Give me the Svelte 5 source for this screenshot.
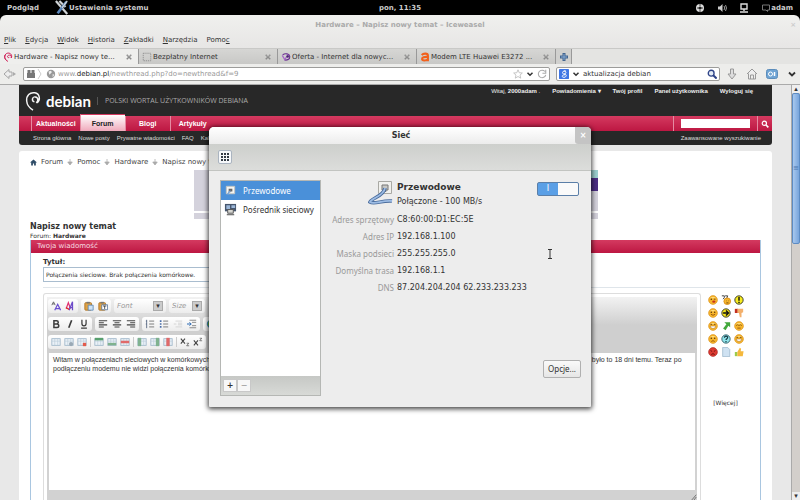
<script lang="ts">
    let subject = "Połączenia sieciowe. Brak połączenia komórkowe."
    let message = "Witam w połączeniach sieciowych w komórkowych nie mam możliwości dodania nowego połączenia w moim komputerze. Wcześniej system wykrywał modem bez problemu, było to 18 dni temu. Teraz po\npodłączeniu modemu nie widzi połączenia komórkowego."
    let search = "aktualizacja debian"
    let siteSearch = ""
    let wired = true
    let dialogShown = true
    let device = 0

    const menu = [
        ["P", "lik"], ["E", "dycja"], ["W", "idok"], ["H", "istoria"],
        ["Z", "akładki"], ["N", "arzędzia"], ["Pomo", "c"]
    ]

    const tabs = [
        { title: "Hardware - Napisz nowy te...", icon: "swirl" },
        { title: "Bezpłatny Internet", icon: "blank" },
        { title: "Oferta - Internet dla nowyc...", icon: "play" },
        { title: "Modem LTE Huawei E3272 ...", icon: "allegro" }
    ]

    const siteTabs = ["Aktualności", "Forum", "Blogi", "Artykuły"]
    const subLinks = ["Strona główna", "Nowe posty", "Prywatne wiadomości", "FAQ", "Kalendarz"]
    const crumbs = ["Forum", "Pomoc", "Hardware"]

    const rows = [
        [["fontColor", "clearFormat"], ["paste", "pasteText"]],
        [["bold", "italic", "underline"], ["left", "center", "right"], ["ordered", "bullets", "outdent", "indent"], ["globe"]],
        [["table", "tableEdit", "tableDel", "|", "rowTop", "rowBottom", "rowDel", "|", "colLeft", "colRight", "colDel", "|", "sub", "sup"]]
    ]

    const smilies = [
        "wink", "puzzled", "warn",
        "smile", "arrow", "down",
        "grin", "share", "cool",
        "sad", "ask", "grin",
        "angry", "page", "up"
    ]

    const details = [
        ["Adres sprzętowy", "C8:60:00:D1:EC:5E"],
        ["Adres IP", "192.168.1.100"],
        ["Maska podsieci", "255.255.255.0"],
        ["Domyślna trasa", "192.168.1.1"],
        ["DNS", "87.204.204.204 62.233.233.233"]
    ]

    const grid = '<rect x="1" y="2" width="10" height="8" fill="#eaf1f7" stroke="#9fb6c9"/><path d="M1 5h10M4.500 2v8M8 2v8" stroke="#b7c9d8" stroke-width=".7"/>'
    const face = '<circle cx="6" cy="6" r="5.300" fill="#f6b52c" stroke="#d98c13" stroke-width=".7"/><path d="M2.500 4a4 3 0 0 1 7 0" fill="#fddf83"/>'
    const eyes = '<circle cx="4" cy="5" r=".9" fill="#5b3608"/><circle cx="8" cy="5" r=".9" fill="#5b3608"/>'

    // Every glyph is drawn on a 12x12 grid
    const icons: Record<string, string> = {
        swirl: '<path d="M7.500 6.500C5.500 7.500 4.500 5 6.500 4s4.500 1 3.300 3.200M9.800 7.200C12 3.500 8 0 4.500 1.700S.8 9 6 11.300M3 3C1.200 5 2 9 4.500 10" fill="none" stroke="#d0225a" stroke-width="1.200"/>',
        blank: '<path d="M1.500 1.500h9v9h-9z" fill="none" stroke="#888" stroke-dasharray="1.500 1"/>',
        play: '<path d="M2 3.500C5 1 10 2 10.500 5.500S6 10.500 4 9" fill="none" stroke="#6a2f91" stroke-width="1.400"/><path d="M1.500 4l3 5 4-6" fill="none" stroke="#a667c8" stroke-width="1.500"/><circle cx="8" cy="5.500" r="1.500" fill="#4a2470"/>',
        allegro: '<path d="M2 3.500C4 1.500 9.500 1 9.500 4.500V11M9.500 6C5 5.500 2.500 6.500 2.500 8.500S7.500 11 9.500 8.500" fill="none" stroke="#f2611c" stroke-width="2.500"/>',
        bold: '<path d="M3.500 2h3.200a2 2 0 0 1 0 4H3.500zM3.500 6h3.700a2.100 2.100 0 0 1 0 4.200H3.500z" fill="none" stroke="#3d3d3d" stroke-width="1.800"/>',
        italic: '<path d="M8 1.500L4.500 10.500" stroke="#3d3d3d" stroke-width="2"/>',
        underline: '<path d="M3.500 1v4.500a2.500 2.700 0 0 0 5 0V1M2.500 10.800h7" fill="none" stroke="#3d3d3d" stroke-width="1.500"/>',
        left: '<path d="M1 2h10M1 4.500h6M1 7h10M1 9.500h6" stroke="#444" stroke-width="1.300"/>',
        center: '<path d="M1 2h10M3 4.500h6M1 7h10M3 9.500h6" stroke="#444" stroke-width="1.300"/>',
        right: '<path d="M1 2h10M5 4.500h6M1 7h10M5 9.500h6" stroke="#444" stroke-width="1.300"/>',
        ordered: '<path d="M2 1v10M1 2.500h1M1 6h1" stroke="#4a5c78"/><path d="M5 2.500h6M5 6h6M5 9.500h6" stroke="#666"/>',
        bullets: '<path d="M1 1.500h2v2H1zM1 5h2v2H1zM1 8.500h2v2H1z" fill="#4a6ea8"/><path d="M5 2.500h6M5 6h6M5 9.500h6" stroke="#666"/>',
        outdent: '<path d="M3 2.500h8M6 5h5M6 7h5M3 9.500h8M1 6h3" stroke="#cfcfcf"/>',
        indent: '<path d="M3 1.500h8M6 4h5M6 8h5M3 10.500h8" stroke="#777"/><path d="M0 6h5l-2-2M5 6l-2 2" fill="none" stroke="#2f6db5" stroke-width="1.200"/>',
        globe: '<circle cx="6" cy="6" r="5" fill="#3d8ec4"/><path d="M3 3c3-1 4 1 3 3S3 9 2 7zM8 7l2-1-1 3z" fill="#6cb53c"/>',
        fontColor: '<path d="M1 5l2-4 2 4M2 3.500h2" fill="none" stroke="#555"/><path d="M4.500 11L8 4l3.500 7M6 9h4.500" fill="none" stroke="#6a4fd0" stroke-width="1.500"/>',
        clearFormat: '<path d="M1.500 9L4 2l2.500 7" fill="none" stroke="#e02b6d" stroke-width="1.400"/><path d="M5 11L9 1v10M5 8h4" fill="none" stroke="#6b49c8" stroke-width="1.500"/><path d="M1 8l4 2" stroke="#e02b2b" stroke-width="1.500"/>',
        paste: '<rect x="1" y="2" width="8" height="9" rx="1" fill="#e0a244" stroke="#a86f20"/><path d="M3 1h4v2H3z" fill="#777"/><path d="M5 5h6v6H5z" fill="#cfe3f5" stroke="#5a86b5"/>',
        pasteText: '<rect x="1" y="2" width="8" height="9" rx="1" fill="#e0a244" stroke="#a86f20"/><path d="M3 1h4v2H3z" fill="#777"/><path d="M4.500 4.500h7v6h-7z" fill="#fff" stroke="#55749a"/><path d="M6 6h4M8 6v3.500" stroke="#333"/>',
        table: grid,
        tableEdit: grid + '<circle cx="8.500" cy="8.500" r="2.500" fill="#9aa9b5"/>',
        tableDel: grid + '<path d="M7 7h4v4H7z" fill="#e35b4c"/>',
        rowTop: grid + '<path d="M1 1h10v3H1z" fill="#58a06e"/>',
        rowBottom: grid + '<path d="M1 7h10v3H1z" fill="#7fb28f"/>',
        rowDel: grid + '<path d="M1 4.500h10v3H1z" fill="#e06a6a"/>',
        colLeft: grid + '<path d="M1 1h4v10H1z" fill="#7fb28f"/>',
        colRight: grid + '<path d="M7 1h4v10H7z" fill="#7fb28f"/>',
        colDel: grid + '<path d="M4 1h4v10H4z" fill="#e06a6a"/>',
        sub: '<path d="M1 2l5 6M6 2L1 8" stroke="#444" stroke-width="1.300"/><path d="M8 7.500h2.500L8 10.500h3" fill="none" stroke="#444" stroke-width=".8"/>',
        sup: '<path d="M1 4l5 6M6 4l-5 6" stroke="#444" stroke-width="1.300"/><path d="M8 1.500h2.500L8 4.500h3" fill="none" stroke="#444" stroke-width=".8"/>',
        smile: face + eyes + '<path d="M3.500 7.500q2.500 2.500 5 0" fill="none" stroke="#8a4a08"/>',
        wink: face + '<circle cx="4" cy="5" r=".9" fill="#5b3608"/><path d="M7 5h2" stroke="#5b3608"/><ellipse cx="7" cy="8" rx="2" ry="1.300" fill="#c7321b"/>',
        puzzled: '<path d="M1 1h3v2L2.500 5M5 1h3L6.500 5" fill="none" stroke="#222"/><circle cx="7.500" cy="7.500" r="4" fill="#f6b52c" stroke="#d98c13"/><path d="M6 7h.5M9 7h.5M6.500 9.500h2.500" stroke="#5b3608"/>',
        warn: '<circle cx="6" cy="6" r="5" fill="#f7ec1f" stroke="#222"/><path d="M6 2.500v4.500M6 8.200v1.500" stroke="#111" stroke-width="1.700"/>',
        arrow: '<circle cx="6" cy="6" r="5" fill="#f3e21b" stroke="#222"/><path d="M2.500 6h6.500M6 3l3 3-3 3" fill="none" stroke="#111" stroke-width="1.600"/>',
        down: '<path d="M1 1h4v5H1z" fill="#c22f22"/><path d="M4 1h7v4L9 6v5H7L6 6H4z" fill="#f3b06c"/>',
        grin: face + '<path d="M3 4h2M7 4h2" stroke="#5b3608"/><path d="M2.500 6h7q-.5 3-3.500 3t-3.500-3z" fill="#fff" stroke="#a6670c" stroke-width=".6"/>',
        share: '<path d="M4 1.500h7v6L8.800 5.800 5.500 11 2.500 9l4-5z" fill="#43a83c"/>',
        cool: face + '<path d="M2.500 5.500q2-2 3.500 0 1.500-2 3.500 0" fill="none" stroke="#8a5a08"/><path d="M4 8.500h4" stroke="#8a4a08"/>',
        sad: face + eyes + '<path d="M4 9q2-2 4 0" fill="none" stroke="#8a4a08"/>',
        ask: '<circle cx="6" cy="6" r="5" fill="#8fe3ea" stroke="#2a5560"/><path d="M4.200 4.500C4.200 2 8 2 8 4.300 8 5.800 6 5.500 6 7.200M6 8.500v1.400" fill="none" stroke="#16353d" stroke-width="1.400"/>',
        angry: '<circle cx="6" cy="6" r="5.300" fill="#dc3a31" stroke="#a61f1a" stroke-width=".7"/><path d="M3 4l2 1.500M9 4L7 5.500M4 9q2-2 4 0" fill="none" stroke="#5b0d08"/>',
        page: '<path d="M2 .5h6l2.500 2.500v8.500H2z" fill="#cfe2f2" stroke="#90adc6" stroke-width=".8"/>',
        up: '<path d="M1 6h3v5H1z" fill="#9ccb4a"/><path d="M4 6l3-5 1.500 1L8 5h3.500l-1 6H4z" fill="#f5b83c"/>'
    }
</script>

<div class="desktop">
    <header class="panel">
        <div class="side">
            <button>Podgląd</button>
            <button class="app">
                <svg viewBox="0 0 16 15"><path d="M1 0l13 15M5 0l7 7" stroke="#cfd3d6" stroke-width="2.500" /><path d="M13 1L3 14" stroke="#5b86bb" stroke-width="3" /><path d="M14 0L8 8" stroke="#d5d8da" stroke-width="1.500" /></svg>
                Ustawienia systemu
            </button>
        </div>
        <button class="clock">pon, 11:35</button>
        <div class="side tray">
            <svg viewBox="0 0 10 10"><circle cx="5" cy="5" r="4" fill="#ddd" /><circle cx="5" cy="5" r="1.500" fill="#222" /><path d="M5 0v3M5 7v3M2 5h6" stroke="#222" stroke-width=".8" /></svg>
            <svg viewBox="0 0 10 10"><path d="M1 3.500h2L5.500 1v8L3 6.500H1z" fill="#ccc" /><path d="M7 3q1.500 2 0 4M8.500 2q2 3 0 6" fill="none" stroke="#999" /></svg>
            <svg viewBox="0 0 10 10"><path d="M2 1h6v5H2zM5 6v2M1 9h8" fill="none" stroke="#ddd" stroke-width="1.400" /></svg>
            <button class="user">
                <svg viewBox="0 0 10 10"><path d="M1.500 2h7v5h-2v1.500L5 7H1.500z" fill="none" stroke="#777" /></svg>
                adam
            </button>
        </div>
    </header>

    <main class="window">
        <div class="title">Hardware – Napisz nowy temat – Iceweasel <button class="quit" aria-label="Zamknij okno">×</button></div>
        <nav class="menu">
            {#each menu as [head, tail]}
                <button>{#if head === "Pomo"}{head}<u>{tail}</u>{:else}<u>{head}</u>{tail}{/if}</button>
            {/each}
        </nav>

        <div class="tabs">
            {#each tabs as tab, i}
                <div class="tab" class:current={i === 0}>
                    <svg viewBox="0 0 12 12">{@html icons[tab.icon]}</svg>
                    <button class="name">{tab.title}</button>
                    <button class="close" aria-label="Zamknij kartę">
                        <svg viewBox="0 0 8 8"><path d="M1 1l6 6M7 1L1 7" stroke="#8b8b8b" stroke-width="2" /><path d="M2 1.500l2 1.500 2-1.500" fill="none" stroke="#ddd" stroke-width=".6" /></svg>
                    </button>
                </div>
            {/each}
            <button class="plus" aria-label="Nowa karta">
                <svg viewBox="0 0 10 10"><path d="M5 1v8M1 5h8" stroke="#41648f" stroke-width="3" /><path d="M5 2v6M2 5h6" stroke="#86a9d2" /></svg>
            </button>
        </div>

        <div class="navbar">
            <button class="back" aria-label="Wstecz">
                <svg viewBox="0 0 14 12"><path d="M1 6l5-4.500V4h3v4H6v2.500z" fill="#eee" stroke="#a5a5a5" /><path d="M10 4l3 2-3 2z" fill="#aaa" /></svg>
            </button>
            <div class="field address">
                <svg class="ident" viewBox="0 0 18 10"><path d="M1 4h8v5H1zM1.500 1h3v3h-3zM5.500 1h3v3h-3z" fill="#777" /><path d="M12 0l3 5-3 5" fill="none" stroke="#ccc" /></svg>
                <svg viewBox="0 0 12 12"><circle cx="6" cy="6" r="5" fill="#999" /><path d="M3 3l3-1 1 2-3 3zM8 6l2 1-2 3z" fill="#eee" /></svg>
                <a href="#top">www.<b>debian.pl</b>/newthread.php?do=newthread&f=9</a>
                <svg class="star" viewBox="0 0 12 12"><path d="M6 1l1.500 3.500 3.700.3-2.800 2.500.9 3.700L6 9l-3.300 2 .9-3.700L.8 4.800l3.700-.3z" fill="none" stroke="#bbb" /></svg>
                <svg viewBox="0 0 12 12"><path d="M3 4.500l3 3 3-3" fill="none" stroke="#333" stroke-width="1.800" /></svg>
                <svg viewBox="0 0 12 12"><path d="M9.500 3A4.500 4.500 0 1 0 10.500 7M10.500 1v4h-4" fill="none" stroke="#aaa" stroke-width="1.300" /></svg>
            </div>
            <div class="field finder">
                <svg viewBox="0 0 12 12"><rect width="12" height="12" rx="1" fill="#3f76e4" /><path d="M8.500 2.500C4 1 3 6 6 6s3-3.500 0-3.500M6 6c4 0 3 4 0 4s-3-3 1-3" fill="none" stroke="#fff" stroke-width="1.200" /></svg>
                <svg viewBox="0 0 12 12"><path d="M3 4.500l3 3 3-3" fill="none" stroke="#333" stroke-width="1.800" /></svg>
                <input aria-label="Szukaj w sieci" bind:value={search}>
                <svg viewBox="0 0 12 12"><circle cx="5" cy="5" r="3.500" fill="#e3ebf5" stroke="#2f4488" stroke-width="1.600" /><path d="M7.500 7.500l4 4" stroke="#2f4488" stroke-width="2.400" /></svg>
            </div>
            <div class="actions">
                <button aria-label="Pobrane"><svg viewBox="0 0 12 12"><path d="M4.500 1h3v5H10l-4 5-4-5h2.500z" fill="#ddd" stroke="#999" /></svg></button>
                <button aria-label="Strona startowa"><svg viewBox="0 0 12 12"><path d="M1 6l5-5 5 5M2.500 5.500V11h7V5.500M4.500 11V7h3v4" fill="#eee" stroke="#999" /></svg></button>
                <button aria-label="Dodatki"><svg viewBox="0 0 12 12"><rect x=".5" y="1.500" width="11" height="9" rx="2" fill="#6ea3d3" stroke="#5c8dbb" /><circle cx="4.500" cy="6" r="2" fill="none" stroke="#fff" /><path d="M8.500 4v4" stroke="#fff" stroke-width="1.500" /></svg></button>
                <button aria-label="Więcej"><svg viewBox="0 0 12 12"><path d="M3 4.500l3 3 3-3" fill="none" stroke="#333" stroke-width="1.800" /></svg></button>
            </div>
        </div>

        <div class="view">
            <div class="page">
                <header class="site">
                    <div class="brand">
                        <svg viewBox="0 0 18 22"><path d="M10 12C6.500 11 7.500 6 11 6.500s3.500 4.500 1 6.500M13 13c4-3 3-10-2.500-11S1 5 1.500 11 5 19 8.500 21" fill="none" stroke="#f4f4f4" stroke-width="1.600" /></svg>
                        <strong>debian</strong>
                        <span class="motto">POLSKI WORTAL UŻYTKOWNIKÓW DEBIANA</span>
                        <div class="account">
                            <span>Witaj, <a href="#me"><b>2000adam</b></a> .</span>
                            <a href="#notes"><b>Powiadomienia ▾</b></a>
                            <a href="#profile"><b>Twój profil</b></a>
                            <a href="#panel"><b>Panel użytkownika</b></a>
                            <a href="#logout"><b>Wyloguj się</b></a>
                        </div>
                    </div>
                    <nav class="red">
                        {#each siteTabs as name}
                            <a href="#{name}" class:current={name === "Forum"}>{name}</a>
                        {/each}
                        <div class="lookup"><input aria-label="Szukaj na forum" bind:value={siteSearch}></div>
                        <button aria-label="Szukaj"><svg viewBox="0 0 12 12"><circle cx="5" cy="5" r="3.200" fill="none" stroke="#fff" stroke-width="1.800" /><path d="M7.500 7.500l3.500 3.500" stroke="#fff" stroke-width="2.400" /></svg></button>
                    </nav>
                    <nav class="sub">
                        {#each subLinks as name}<a href="#{name}">{name}</a>{/each}
                        <a class="advanced" href="#advanced">Zaawansowane wyszukiwanie</a>
                    </nav>
                </header>

                <section class="thread">
                    <nav class="crumbs">
                        <svg viewBox="0 0 12 12"><path d="M0 6l6-5 6 5h-2v5H7V7.500H5V11H2V6z" fill="#2f4d68" /></svg>
                        {#each crumbs as name}
                            <a href="#{name}">{name}</a>
                            <svg class="sep" viewBox="0 0 8 8"><path d="M4 0v4M1 4h6L4 8z" fill="#aaa" stroke="#aaa" /></svg>
                        {/each}
                        <span>Napisz nowy temat</span>
                    </nav>
                    <aside class="ad"><i></i><b></b></aside>
                    <h1>Napisz nowy temat</h1>
                    <p class="where">Forum: <a href="#hardware">Hardware</a></p>

                    <form class="post" on:submit|preventDefault>
                        <h2>Twoja wiadomość</h2>
                        <div class="inner">
                            <label for="subject">Tytuł:</label>
                            <input id="subject" bind:value={subject}>
                            <hr>
                            <div class="compose">
                                <div class="editor">
                                    <div class="tools">
                                        {#each rows as row, r}
                                            <div class="row">
                                                {#each row as group}
                                                    <div class="group">
                                                        {#each group as icon}
                                                            {#if icon === "|"}
                                                                <span class="bar"></span>
                                                            {:else}
                                                                <button type="button" aria-label={icon}><svg viewBox="0 0 12 12">{@html icons[icon]}</svg></button>
                                                            {/if}
                                                        {/each}
                                                    </div>
                                                {/each}
                                                {#if r === 0}
                                                    <div class="group pick font"><select aria-label="Czcionka"><option>Font</option></select></div>
                                                    <div class="group pick"><select aria-label="Rozmiar"><option>Size</option></select></div>
                                                {/if}
                                            </div>
                                        {/each}
                                    </div>
                                    <textarea aria-label="Wiadomość" bind:value={message}></textarea>
                                    <div class="grip"><svg viewBox="0 0 8 8"><path d="M1 8l6-7M4 8l3-4" stroke="#555" /></svg></div>
                                </div>
                                <div class="smilies">
                                    <div class="faces">
                                        {#each smilies as face}
                                            <button type="button" aria-label={face}><svg viewBox="0 0 12 12">{@html icons[face]}</svg></button>
                                        {/each}
                                    </div>
                                    <a href="#more">[Więcej]</a>
                                </div>
                            </div>
                        </div>
                    </form>
                </section>
            </div>
            <div class="scroll">
                <span class="step">▴</span>
                <span class="thumb">≡</span>
                <span class="step end">▾</span>
            </div>
        </div>
    </main>

    {#if dialogShown}
        <div class="layer">
            <div class="dialog" role="dialog" aria-labelledby="net-title">
                <div class="bar-title">
                    <h2 id="net-title">Sieć</h2>
                    <button aria-label="Zamknij" on:click={() => dialogShown = false}>×</button>
                </div>
                <div class="bar-tools">
                    <button aria-label="Wszystkie ustawienia"><svg viewBox="0 0 10 10"><path d="M1 1h2v2H1zM4 1h2v2H4zM7 1h2v2H7zM1 4h2v2H1zM4 4h2v2H4zM7 4h2v2H7zM1 7h2v2H1zM4 7h2v2H4zM7 7h2v2H7z" fill="#333b45" /></svg></button>
                </div>
                <div class="content">
                    <div class="devices">
                        <div class="list">
                            <button class:selected={device === 0} on:click={() => device = 0}>
                                <svg viewBox="0 0 14 14"><path d="M2.500 2.500h9v8h-9z" fill="#f5f5f2" stroke="#c4c4bf" /><path d="M5 5h4v3H7v1H5z" fill="#666" /><path d="M4 11q2-4 3-3" fill="none" stroke="#7ba6d8" stroke-width="1.500" /></svg>
                                Przewodowe
                            </button>
                            <button class:selected={device === 1} on:click={() => device = 1}>
                                <svg viewBox="0 0 14 14"><path d="M1 1h12v8H1z" fill="#46566d" /><path d="M2.500 2.500h4v4h-4zM8 2.500h4v3H8z" fill="#9cb7d8" /><path d="M4 7h6v4H4z" fill="#d8d8d3" stroke="#555" /><path d="M3 12.500h8" stroke="#777" stroke-width="1.500" /></svg>
                                Pośrednik sieciowy
                            </button>
                        </div>
                        <div class="edit">
                            <button aria-label="Dodaj">+</button><button aria-label="Usuń" disabled>−</button>
                        </div>
                    </div>
                    <div class="info">
                        <div class="head">
                            <svg viewBox="0 0 26 26"><path d="M10.500 1.500h13v12h-13z" fill="#f1f1ee" stroke="#a9a9a4" /><path d="M14 5h6v5h-2v1.500h-2.500V10H14z" fill="#c9c9c5" stroke="#777" /><path d="M17 8C16 16 4 18 2 22c4 3 12-2 22-1" fill="none" stroke="#4a6c9c" stroke-width="3.500" /><path d="M17 8C16 16 4 18 2 22c4 3 12-2 22-1" fill="none" stroke="#9dbce4" stroke-width="1.800" /></svg>
                            <div>
                                <h3>Przewodowe</h3>
                                <p>Połączone - 100 MB/s</p>
                            </div>
                            <input type="checkbox" role="switch" aria-label="Przewodowe" bind:checked={wired}>
                        </div>
                        <dl>
                            {#each details as [name, value]}
                                <dt>{name}</dt><dd>{value}</dd>
                            {/each}
                        </dl>
                        <button class="options">Opcje...</button>
                    </div>
                    <svg class="caret" viewBox="0 0 6 10"><path d="M1 .5h4M3 .5v9M1 9.500h4" fill="none" stroke="#333" /></svg>
                </div>
            </div>
        </div>
    {/if}
</div>

<style>
    .desktop {
        position: relative;
        display: flex;
        flex-direction: column;
        height: 100vh;
        overflow: hidden;
        background: #000;
        font: 7px/10px "DejaVu Sans", sans-serif;
        color: #333;
    }
    svg {
        display: block;
        flex: none;
        width: 10px;
        height: 10px;
    }
    button, input, textarea, select {
        margin: 0;
        padding: 0;
        border: none;
        background: none;
        font: inherit;
        color: inherit;
    }
    input, textarea {
        outline: none;
    }
    a {
        color: inherit;
        text-decoration: none;
    }
    h1, h2, h3, p, dl, dd {
        margin: 0;
    }

    .panel {
        display: flex;
        align-items: center;
        height: 15px;
        padding: 0 7px;
        color: #ccc;
        font-weight: bold;
    }
    .side {
        display: flex;
        flex: 1;
        align-items: center;
        gap: 16px;
    }
    .app, .user {
        display: flex;
        align-items: center;
    }
    .app svg {
        width: 14px;
        height: 15px;
    }
    .tray {
        justify-content: flex-end;
        gap: 12px;
    }

    .window {
        display: flex;
        flex: 1;
        flex-direction: column;
        min-height: 0;
        border-radius: 6px 6px 0 0;
        background: linear-gradient(#f0f0ee, #e6e5e4 36px, #ececeb 60px);
    }
    .title {
        position: relative;
        padding-top: 4px;
        font-weight: bold;
        line-height: 12px;
        text-align: center;
        color: #aaa;
    }
    .quit {
        position: absolute;
        right: 4px;
        color: #ccc;
    }
    .menu {
        display: flex;
        gap: 9px;
        padding: 4px 4px 3px;
    }
    .tabs {
        display: flex;
        height: 15px;
        border-top: 1px solid #c9c9c7;
        background: #e4e4e2;
    }
    .tab {
        display: flex;
        align-items: center;
        gap: 1px;
        width: 132px;
        padding: 0 3px;
        border-right: 1px solid #999;
        background: linear-gradient(#d6d6d4, #c8c8c6);
    }
    .tab.current {
        background: #efefed;
    }
    .name {
        flex: 1;
        overflow: hidden;
        text-align: left;
        white-space: nowrap;
    }
    .close svg {
        width: 6px;
        height: 6px;
        margin-right: 3px;
    }
    .plus {
        width: 16px;
        padding-left: 3px;
        border-right: 1px solid #999;
        background: #d0d0ce;
    }
    .navbar {
        display: flex;
        align-items: center;
        gap: 6px;
        height: 20px;
        padding: 0 2px 0 3px;
        border-bottom: 1px solid #aaa;
        background: #ededeb;
    }
    .back svg {
        width: 14px;
        height: 12px;
    }
    .field {
        display: flex;
        align-items: center;
        gap: 2px;
        height: 12px;
        padding: 0 2px;
        border: 1px solid #9c9c9a;
        border-radius: 2px;
        background: #fff;
        color: #999;
    }
    .address {
        flex: 1;
    }
    .address b {
        font-weight: normal;
        color: #222;
    }
    .ident {
        width: 18px;
    }
    .star {
        margin-left: auto;
    }
    .finder {
        width: 158px;
        color: #333;
    }
    .finder input {
        flex: 1;
        min-width: 0;
    }
    .actions {
        display: flex;
        gap: 8px;
    }
    .actions svg {
        width: 12px;
        height: 12px;
    }

    .view {
        display: flex;
        flex: 1;
        min-height: 0;
        background: #e8e8e8;
        overflow: hidden;
    }
    .page {
        display: flex;
        flex: 1;
        flex-direction: column;
        gap: 6px;
        min-width: 0;
        padding: 0 19px;
    }
    .site {
        border-radius: 0 0 3px 3px;
        background: #282828;
        color: #ddd;
        font: 6px/10px "Liberation Sans", sans-serif;
    }
    .brand {
        display: flex;
        align-items: center;
        height: 31px;
        padding-left: 6px;
    }
    .brand svg {
        width: 17px;
        height: 20px;
        margin-right: 4px;
    }
    .brand strong {
        color: #fff;
        font: bold 15px/20px "Liberation Sans Narrow", Lato, sans-serif;
    }
    .motto {
        margin-left: 6px;
        padding-left: 7px;
        border-left: 1px solid #555;
        font: 7px/8px "Open Sans", sans-serif;
        color: #aaa;
    }
    .account {
        display: flex;
        align-self: flex-start;
        gap: 12px;
        margin-left: auto;
        padding: 1px 19px 0 0;
        color: #eee;
    }
    .red {
        display: flex;
        height: 15px;
        padding-left: 12px;
        background: linear-gradient(#d43a60, #bd1742);
        color: #fff;
    }
    .red a {
        min-width: 36px;
        padding: 0 4px;
        border-left: 1px solid #e58ba2;
        font: bold 7px/15px "Liberation Sans", sans-serif;
        text-align: center;
    }
    .red a.current {
        margin-top: -2px;
        padding-top: 1px;
        border-top: 1px solid #d43a60;
        background: linear-gradient(#fff, #f0a9bb);
        color: #222;
    }
    .lookup {
        margin-left: auto;
        padding: 2px 7px 0;
        border-left: 1px solid #e58ba2;
    }
    .lookup input {
        width: 69px;
        height: 9px;
        background: #fff;
        color: #333;
    }
    .red button {
        padding: 0 3px;
        border-left: 1px solid #e58ba2;
    }
    .red button svg {
        width: 8px;
        height: 8px;
    }
    .sub {
        display: flex;
        gap: 7px;
        padding: 2px 11px 2px 14px;
    }
    .advanced {
        margin-left: auto;
    }

    .thread {
        display: flex;
        flex: 1;
        flex-direction: column;
        padding: 6px 11px 0;
        border-radius: 3px 3px 0 0;
        background: #fff;
    }
    .crumbs {
        display: flex;
        align-items: center;
        gap: 4px;
        color: #444;
    }
    .crumbs svg {
        width: 7px;
        height: 7px;
    }
    .crumbs .sep {
        width: 6px;
        height: 6px;
    }
    .ad {
        display: flex;
        flex-direction: column;
        align-items: flex-end;
        width: 404px;
        max-width: 100%;
        height: 49px;
        margin: 3px auto;
        background: linear-gradient(#d4d2dc 41px, #fff 41px, #fff 43px, #d4d2dc 43px);
    }
    .ad i {
        width: 9px;
        height: 8px;
        background: #9ccfd0;
    }
    .ad b {
        width: 100%;
        max-width: 60px;
        height: 13px;
        background: #4b2e83;
    }
    h1 {
        font-size: 8px;
        line-height: 9px;
    }
    .where {
        font-size: 6px;
        line-height: 9px;
    }
    .where a {
        font-weight: bold;
    }
    .post {
        display: flex;
        flex: 1;
        flex-direction: column;
        border: 1px solid #a9c6e0;
        border-width: 0 1px;
    }
    .post h2 {
        padding-left: 6px;
        background: linear-gradient(#d43a60, #bd1742);
        font-size: 7px;
        font-weight: normal;
        line-height: 13px;
        color: #f7dbe2;
    }
    .inner {
        display: flex;
        flex: 1;
        flex-direction: column;
        padding: 4px 10px 0 12px;
    }
    .inner label {
        font-weight: bold;
    }
    #subject {
        width: 60%;
        height: 13px;
        padding: 0 2px;
        border: 1px solid #a9bdcf;
        font-size: 6px;
    }
    hr {
        width: 100%;
        margin: 5px 0;
        border: none;
        border-top: 1px solid #dfe5ea;
    }
    .compose {
        display: flex;
        flex: 1;
    }
    .editor {
        display: flex;
        flex: 1;
        flex-direction: column;
        padding: 3px 3px 0;
        border: 1px solid #ddd;
        border-bottom: none;
        border-radius: 3px 3px 0 0;
    }
    .tools {
        padding: 2px 1px 0;
        background: linear-gradient(#f2f2f2, #cfcfcf 28px);
    }
    .row {
        display: flex;
        gap: 3px;
        padding-bottom: 4px;
    }
    .group {
        display: flex;
        align-items: center;
        gap: 4px;
        height: 14px;
        padding: 0 3px;
        border-radius: 3px;
        background: linear-gradient(#fff, #ececec);
    }
    .bar {
        width: 1px;
        height: 10px;
        background: #ccc;
    }
    .row:last-child .group {
        gap: 3px;
    }
    select {
        width: 16px;
        appearance: none;
        font-style: italic;
        color: #999;
    }
    .pick::after {
        content: "▾";
        width: 8px;
        border: 1px solid #aaa;
        background: #ccc;
        line-height: 8px;
        text-align: center;
    }
    .font select {
        width: 32px;
    }
    textarea {
        flex: 1;
        padding: 2px 4px;
        border: 2px solid #d2d2d2;
        border-width: 0 2px;
        background: #fff;
        font: 7px/9px "Liberation Sans", sans-serif;
        resize: none;
        overflow: hidden;
        white-space: pre;
    }
    .grip {
        display: flex;
        justify-content: flex-end;
        align-items: flex-end;
        height: 10px;
        background: #d2d2d2;
    }
    .grip svg {
        width: 6px;
        height: 6px;
    }
    .smilies {
        display: flex;
        flex-direction: column;
        align-items: center;
        gap: 41px;
        width: 49px;
        padding-top: 2px;
        font-size: 6px;
    }
    .faces {
        display: grid;
        grid-template-columns: repeat(3, 10px);
        gap: 3px;
    }

    .scroll {
        display: flex;
        flex-direction: column;
        width: 8px;
        border-left: 1px solid #aaa;
        background: #d3cfcb;
        text-align: center;
    }
    .step {
        height: 8px;
        line-height: 8px;
        background: #eee;
    }
    .step.end {
        margin-top: auto;
    }
    .thumb {
        height: 36%;
        border: 1px solid #5d8cc4;
        border-radius: 2px;
        background: linear-gradient(90deg, #a8c8ee, #78a5dc);
        line-height: 148px;
        color: #4a78b0;
    }

    .layer {
        position: absolute;
        inset: 127px 0 auto;
        display: flex;
        justify-content: center;
    }
    .dialog {
        width: 382px;
        max-width: 100%;
        border-radius: 5px 5px 1px 1px;
        background: #ededed;
        box-shadow: 0 1px 5px 1px rgba(0,0,0,.75);
        font-size: 8px;
    }
    .bar-title {
        display: flex;
        border-radius: 5px 5px 0 0;
        background: linear-gradient(#fff, #ececec);
        line-height: 17px;
    }
    .bar-title h2 {
        flex: 1;
        padding-left: 18px;
        font-size: 8px;
        text-align: center;
    }
    .bar-title button {
        width: 16px;
        border-radius: 0 4px 0 3px;
        background: #c4c4c4;
        color: #fff;
        font-weight: bold;
    }
    .bar-tools {
        padding: 6px 9px 5px;
        border-bottom: 1px solid #c2c4c1;
        background: linear-gradient(#cdcfcc, #dcdddb);
    }
    .bar-tools button {
        padding: 1px;
        border: 1px solid #aab4c0;
        border-radius: 2px;
        background: #f6f8fa;
    }
    .content {
        position: relative;
        display: flex;
        gap: 9px;
        padding: 9px 10px 11px 11px;
    }
    .devices {
        display: flex;
        flex-direction: column;
        width: 99px;
        border: 1px solid #b5b7b4;
    }
    .list {
        display: flex;
        flex-direction: column;
        min-height: 195px;
        background: #fff;
    }
    .list button, dt, .options {
        font-family: "Noto Sans", sans-serif;
    }
    .list button {
        display: flex;
        align-items: center;
        gap: 6px;
        height: 19px;
        padding-left: 3px;
        white-space: nowrap;
    }
    .list svg {
        width: 13px;
        height: 13px;
    }
    .list .selected {
        background: #4a90d9;
        color: #fff;
    }
    .edit {
        display: flex;
        padding: 3px 2px;
        background: linear-gradient(#c6c8c5, #d8dad7);
    }
    .edit button {
        width: 14px;
        height: 13px;
        border: 1px solid #c8c8c8;
        background: #f7f7f7;
        font-weight: bold;
        line-height: 11px;
    }
    .edit button:disabled {
        color: #aaa;
    }
    .info {
        display: flex;
        flex: 1;
        flex-direction: column;
    }
    .head {
        display: flex;
        align-items: flex-start;
        gap: 3px;
        padding-left: 38px;
    }
    .head svg {
        width: 26px;
        height: 26px;
    }
    h3 {
        font-size: 9px;
        line-height: 15px;
    }
    .head p {
        line-height: 14px;
    }
    .head input {
        width: 42px;
        height: 14px;
        margin: 2px 2px 0 auto;
        appearance: none;
        border: 1px solid #5b7fa8;
        border-radius: 2px;
        background: linear-gradient(90deg, #5a9fe6 50%, #fafafa 50%);
    }
    .head input:checked::before {
        content: "I";
        display: block;
        width: 20px;
        color: #fff;
        line-height: 12px;
        text-align: center;
    }
    dl {
        display: grid;
        grid-template-columns: 64px 1fr;
        column-gap: 3px;
        margin-top: 2px;
        line-height: 17px;
        white-space: nowrap;
    }
    dt {
        text-align: right;
        color: #999;
    }
    .options {
        align-self: flex-end;
        margin: auto 0 18px;
        padding: 3px 4px;
        border: 1px solid #b0b0b0;
        border-radius: 2px;
        background: linear-gradient(#fafafa, #e6e6e6);
    }
    .caret {
        position: absolute;
        top: 78px;
        right: 38px;
        width: 6px;
        height: 10px;
    }
</style>
